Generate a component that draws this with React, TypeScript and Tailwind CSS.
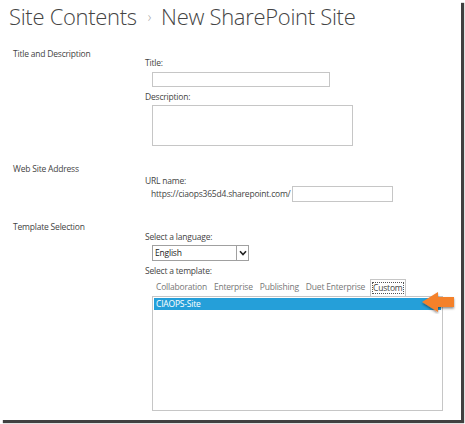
export default function App() {
  const tabs = ['Collaboration', 'Enterprise', 'Publishing', 'Duet Enterprise'];

  return (
    <div className="w-[465px] h-[424px] bg-white" style={{ fontFamily: '"Open Sans", "Noto Sans", sans-serif' }}>
      <div className="relative w-[461px] h-[420px] bg-white shadow-[3px_3px_1px_rgba(0,0,0,0.75)] text-[#444]">
        {/* page title */}
        <h1 className="pl-[9px] pt-[1px] h-[48px] text-[22px] font-light leading-[30px] tracking-[-0.3px] text-[#444] flex items-start">
          <span>Site Contents</span>
          <span className="ml-[11px] mr-[10px] text-[14px] leading-[31px] text-[#aaa]">›</span>
          <span>New SharePoint Site</span>
        </h1>

        {/* Title and Description */}
        <section className="flex text-[8.5px] tracking-[-0.2px] leading-[12px]">
          <div className="w-[145px] pl-[13px]">Title and Description</div>
          <div className="pt-[9px]">
            <p>Title:</p>
            <div className="ml-[7px] mt-[3px] w-[178px] h-[15px] border border-[#c6c6c6]" />
            <p className="mt-[4px]">Description:</p>
            <div className="ml-[7px] mt-[2px] w-[201px] h-[41px] border border-[#c6c6c6]" />
          </div>
        </section>

        {/* Web Site Address */}
        <section className="flex text-[8.5px] tracking-[-0.2px] leading-[12px] mt-[17px]">
          <div className="w-[145px] pl-[13px]">Web Site Address</div>
          <div className="pt-[12px]">
            <p>URL name:</p>
            <div className="flex items-center ml-[6px] -mt-[1px]">
              <span>https://ciaops365d4.sharepoint.com/</span>
              <div className="ml-[1px] w-[101px] h-[16px] border border-[#c6c6c6]" />
            </div>
          </div>
        </section>

        {/* Template Selection */}
        <section className="flex text-[8.5px] tracking-[-0.2px] leading-[12px] mt-[19px]">
          <div className="w-[145px] pl-[13px]">Template Selection</div>
          <div className="pt-[10px]">
            <p>Select a language:</p>
            <div className="ml-[7px] mt-[2px] w-[97px] h-[16px] border border-[#a0a0a0] flex items-stretch">
              <span className="flex-1 pl-[2px] leading-[14px] text-[#222]">English</span>
              <span className="w-[12px] border-l border-[#a0a0a0] flex items-center justify-center">
                <svg width="8" height="6" viewBox="0 0 8 6">
                  <path d="M1 1.2 L4 4.5 L7 1.2" fill="none" stroke="#222" strokeWidth="1.6" />
                </svg>
              </span>
            </div>
            <p className="mt-[4px]">Select a template:</p>
            <div className="ml-[7px] mt-[2px] w-[291px]">
              <div className="flex items-end h-[17px] pl-[4px] text-[#777]">
                {tabs.map((t) => (
                  <span key={t} className="mr-[7px] pb-[3px]">
                    {t}
                  </span>
                ))}
                <span className="-ml-[2px] px-[2px] h-[17px] border border-b-0 border-[#c6c6c6] bg-white flex items-center">
                  <span className="outline outline-1 outline-dotted outline-[#555] text-[#444] leading-[10px]">Custom</span>
                </span>
              </div>
              <div className="h-[115px] border border-[#c6c6c6] p-[1px]">
                <div className="h-[12px] bg-[#259fd9] text-white pl-[2px] leading-[12px]">CIAOPS-Site</div>
              </div>
            </div>
          </div>
        </section>

        {/* callout arrow */}
        <svg className="absolute left-[419px] top-[290px]" width="40" height="24" viewBox="0 0 40 24">
          <defs>
            <filter id="sh" x="-20%" y="-20%" width="140%" height="160%">
              <feDropShadow dx="0" dy="1.5" stdDeviation="1" floodColor="#000" floodOpacity="0.45" />
            </filter>
          </defs>
          <path d="M3 12 L19 2 L19 7 L35 7 L35 17 L19 17 L19 22 Z" fill="#f4812c" filter="url(#sh)" />
        </svg>
      </div>
    </div>
  );
}
